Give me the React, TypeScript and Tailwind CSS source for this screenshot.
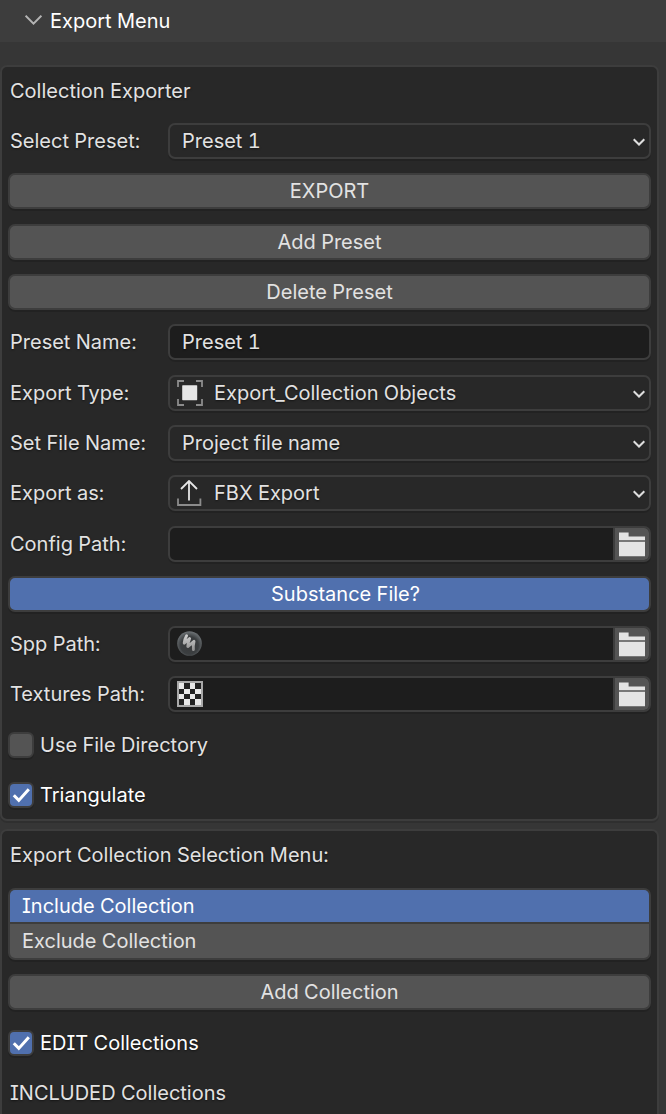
import { useState } from "react";
import type { ReactNode } from "react";

const frame = "border-2 border-[#3d3d3d] rounded-[7px] shadow-[0_2px_0_rgba(0,0,0,0.13)]";

function Chevron() {
  return (
    <svg className="pointer-events-none absolute right-[6px] top-3 h-3 w-3" viewBox="0 0 12 12" fill="none" aria-hidden="true">
      <path d="M0.7 4.3 L6 9.5 L11.3 4.3" stroke="#dedede" strokeWidth="2" />
    </svg>
  );
}

function ObjectIcon() {
  return (
    <svg className="h-[26px] w-[26px]" viewBox="0 0 26 26" fill="none" aria-hidden="true">
      <path d="M1 7V1H7M19 1H25V7M25 19V25H19M7 25H1V19" stroke="#8c8c8c" strokeWidth="1.8" />
      <rect x="5.2" y="5.2" width="15" height="15" rx="0.6" fill="#e6e6e6" />
    </svg>
  );
}

function ExportIcon() {
  return (
    <svg className="h-[26px] w-[26px]" viewBox="0 0 26 26" fill="none" aria-hidden="true">
      <path d="M1 18.5V25H23.4V18.5" stroke="#8c8c8c" strokeWidth="1.8" />
      <path d="M12 20.5V1.5M4 9L12 1L20 9" stroke="#e6e6e6" strokeWidth="1.8" />
    </svg>
  );
}

function SubstanceIcon() {
  return (
    <svg className="h-[26px] w-[26px]" viewBox="0 0 26 26" fill="none" aria-hidden="true">
      <defs>
        <radialGradient id="ball" cx="0.5" cy="0.58" r="0.55">
          <stop offset="0" stopColor="#38393a" />
          <stop offset="0.65" stopColor="#3b3e40" />
          <stop offset="1" stopColor="#6a6f72" />
        </radialGradient>
        <linearGradient id="stroke" x1="0" y1="0" x2="0" y2="1">
          <stop offset="0" stopColor="#cccccc" />
          <stop offset="1" stopColor="#949494" />
        </linearGradient>
      </defs>
      <circle cx="12.5" cy="12.5" r="12.3" fill="url(#ball)" />
      <path
        d="M9.6 4.8Q7.6 8 7.2 12.2L12.6 7.6Q10.8 11.5 10.8 15.6L17 10.4Q16 14.5 16.4 18.6"
        stroke="url(#stroke)"
        strokeWidth="2.9"
        strokeLinecap="round"
        strokeLinejoin="round"
      />
    </svg>
  );
}

function TextureIcon() {
  return (
    <svg className="h-[26px] w-[26px]" viewBox="0 0 26 26" shapeRendering="crispEdges" aria-hidden="true">
      <rect width="26" height="26" fill="#a8a8a8" />
      <rect x="2" y="2" width="22" height="22" fill="#222222" />
      <path
        d="M2 2h5v6h-5zM13 2h5v6h-5zM7 8h6v5h-6zM18 8h6v5h-6zM2 13h5v5h-5zM13 13h5v5h-5zM7 18h6v6h-6zM18 18h6v6h-6z"
        fill="#e8e8e8"
      />
    </svg>
  );
}

function FolderIcon() {
  return (
    <svg className="h-[26px] w-[26px]" viewBox="0 0 26 26" aria-hidden="true">
      <path d="M0 1.6H9.6V5.4H26V9.2H0Z" fill="#e4e4e4" />
      <path d="M0 10.8H26V25.2H0Z" fill="#e4e4e4" />
    </svg>
  );
}

function Row({ id, label, children }: { id: string; label: string; children: ReactNode }) {
  return (
    <div className="flex h-9 items-center">
      <label htmlFor={id} className="w-40 shrink-0 whitespace-nowrap pl-[2px]">
        {label}
      </label>
      {children}
    </div>
  );
}

function SelectRow({ id, label, options, icon }: { id: string; label: string; options: string[]; icon?: ReactNode }) {
  return (
    <Row id={id} label={label}>
      <div className="relative min-w-0 flex-1">
        <select
          id={id}
          className={`block h-9 w-full appearance-none bg-[#282828] pr-8 outline-none [text-shadow:inherit] ${frame} ${icon ? "pl-[44px]" : "pl-3"}`}
        >
          {options.map((o) => (
            <option key={o}>{o}</option>
          ))}
        </select>
        {icon && <span className="pointer-events-none absolute left-[9px] top-[5px]">{icon}</span>}
        <Chevron />
      </div>
    </Row>
  );
}

function PathRow({ id, label, icon }: { id: string; label: string; icon?: ReactNode }) {
  return (
    <Row id={id} label={label}>
      <div className={`relative flex h-9 min-w-0 flex-1 overflow-hidden bg-[#1d1d1d] ${frame}`}>
        <input
          id={id}
          type="text"
          className={`min-w-0 flex-1 bg-transparent pr-2 outline-none ${icon ? "pl-[44px]" : "pl-3"}`}
        />
        {icon && <span className="pointer-events-none absolute left-[7px] top-[3px]">{icon}</span>}
        <button
          type="button"
          aria-label={`Browse ${label}`}
          className="flex w-9 items-center justify-center border-l-2 border-[#3d3d3d] bg-[#545454]"
        >
          <FolderIcon />
        </button>
      </div>
    </Row>
  );
}

function ActionButton({ children }: { children: ReactNode }) {
  return (
    <button type="button" className={`block h-9 w-full bg-[#545454] ${frame}`}>
      {children}
    </button>
  );
}

function ToggleButton({ children }: { children: ReactNode }) {
  const [on, setOn] = useState(true);
  return (
    <button
      type="button"
      aria-pressed={on}
      onClick={() => setOn(!on)}
      className={`block h-9 w-full pl-8 ${frame} ${on ? "bg-[#5070ae] text-white" : "bg-[#545454]"}`}
    >
      {children}
    </button>
  );
}

function CheckRow({ label, initial }: { label: string; initial: boolean }) {
  const [on, setOn] = useState(initial);
  return (
    <label className={`flex h-9 items-center gap-[6px] ${on ? "text-white" : ""}`}>
      <span className="relative h-[26px] w-[26px]">
        <input
          type="checkbox"
          checked={on}
          onChange={(e) => setOn(e.target.checked)}
          className="block h-[26px] w-[26px] appearance-none rounded-[6px] border-2 border-[#3d3d3d] bg-[#545454] shadow-[0_2px_0_rgba(0,0,0,0.13)] checked:bg-[#5070ae]"
        />
        {on && (
          <svg className="pointer-events-none absolute inset-0 h-[26px] w-[26px]" viewBox="0 0 26 26" fill="none" aria-hidden="true">
            <path d="M5.8 13.2L10.8 18.4L20.8 7.2" stroke="#ffffff" strokeWidth="3" />
          </svg>
        )}
      </span>
      {label}
    </label>
  );
}

function Group({ children }: { children: ReactNode }) {
  return <div className="flex flex-col gap-[14px]">{children}</div>;
}

export default function App() {
  const [mode, setMode] = useState("Include Collection");
  return (
    <main className="flex min-h-screen flex-col bg-[#363636] font-['Inter',sans-serif] text-[20px] leading-6 text-[#e2e2e2] [font-feature-settings:'cv08','tnum'] [text-shadow:0_1px_2px_rgba(0,0,0,0.5)]">
      <button type="button" className="flex h-[42px] items-center gap-2 bg-[#3d3d3d] pl-[25px] text-left text-white">
        <svg className="h-[17px] w-[17px]" viewBox="0 0 17 17" fill="none" aria-hidden="true">
          <path d="M0.6 2.6L8.5 10.6L16.4 2.6" stroke="#b4b4b4" strokeWidth="2" />
        </svg>
        Export Menu
      </button>

      <section className="mr-[7px] mt-[23px] flex flex-col gap-[15px] rounded-[7px] border-2 border-[#3d3d3d] bg-[#282828] p-[6px] shadow-[0_2px_0_rgba(0,0,0,0.13)]">
        <Group>
          <h2 className="flex h-9 items-center pl-[2px]">Collection Exporter</h2>
          <SelectRow id="preset" label="Select Preset:" options={["Preset 1"]} />
          <ActionButton>EXPORT</ActionButton>
        </Group>
        <Group>
          <ActionButton>Add Preset</ActionButton>
          <ActionButton>Delete Preset</ActionButton>
          <Row id="name" label="Preset Name:">
            <input
              id="name"
              type="text"
              defaultValue="Preset 1"
              className={`h-9 min-w-0 flex-1 bg-[#1d1d1d] px-3 outline-none [text-shadow:inherit] ${frame}`}
            />
          </Row>
        </Group>
        <Group>
          <SelectRow id="type" label="Export Type:" options={["Export_Collection Objects"]} icon={<ObjectIcon />} />
          <SelectRow id="file" label="Set File Name:" options={["Project file name"]} />
          <SelectRow id="format" label="Export as:" options={["FBX Export"]} icon={<ExportIcon />} />
        </Group>
        <Group>
          <PathRow id="config" label="Config Path:" />
          <ToggleButton>Substance File?</ToggleButton>
          <PathRow id="spp" label="Spp Path:" icon={<SubstanceIcon />} />
          <PathRow id="textures" label="Textures Path:" icon={<TextureIcon />} />
        </Group>
        <Group>
          <CheckRow label="Use File Directory" initial={false} />
          <CheckRow label="Triangulate" initial={true} />
        </Group>
      </section>

      <section className="mr-[7px] mt-2 flex flex-1 flex-col gap-[15px] rounded-t-[7px] border-2 border-b-0 border-[#3d3d3d] bg-[#282828] px-[6px] pt-[6px]">
        <h2 className="flex h-9 items-center pl-[2px]">Export Collection Selection Menu:</h2>
        <Group>
          <div className={`grid h-[72px] grid-rows-[32px_1fr] gap-[2px] overflow-hidden bg-[#3d3d3d] ${frame}`}>
            {["Include Collection", "Exclude Collection"].map((m) => (
              <button
                key={m}
                type="button"
                aria-pressed={m === mode}
                onClick={() => setMode(m)}
                className={`pl-3 text-left ${m === mode ? "bg-[#5070ae] text-white" : "bg-[#545454]"}`}
              >
                {m}
              </button>
            ))}
          </div>
          <ActionButton>Add Collection</ActionButton>
        </Group>
        <Group>
          <CheckRow label="EDIT Collections" initial={true} />
          <h3 className="flex h-9 items-center pl-[2px]">INCLUDED Collections</h3>
        </Group>
      </section>
    </main>
  );
}
